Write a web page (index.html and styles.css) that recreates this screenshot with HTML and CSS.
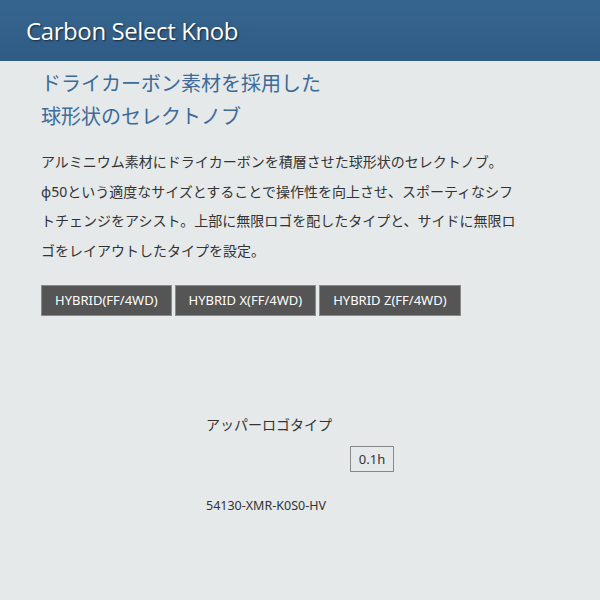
FILE: index.html
```html
<!DOCTYPE html>
<html lang="ja">
	<head>
		<meta charset="UTF-8" />
		<meta name="viewport" content="width=device-width, initial-scale=1" />
		<title>Carbon Select Knob</title>
		<link rel="stylesheet" href="styles.css">
	</head>
	<body>
		<header class="page-header">
			<h1>Carbon Select Knob</h1>
		</header>
		<main class="content">
			<h2 class="lead">ドライカーボン素材を採用した<br />球形状のセレクトノブ</h2>
			<p class="desc">
				アルミニウム素材にドライカーボンを積層させた球形状のセレクトノブ。<br />φ50という適度なサイズとすることで操作性を向上させ、スポーティなシフトチェンジをアシスト。上部に無限ロゴを配したタイプと、サイドに無限ロゴをレイアウトしたタイプを設定。
			</p>
			<div class="tabs">
				<a class="tab" href="#">HYBRID(FF/4WD)</a>
				<a class="tab" href="#">HYBRID X(FF/4WD)</a>
				<a class="tab" href="#">HYBRID Z(FF/4WD)</a>
			</div>
			<div class="item">
				<div class="item-name">アッパーロゴタイプ</div>
				<div class="item-time"><span>0.1h</span></div>
				<div class="item-code">54130-XMR-K0S0-HV</div>
			</div>
		</main>
	</body>
</html>
```

FILE: styles.css
```css
body {
	margin: 0;
	background-color: #e5e9ea;
	color: #333;
	font-family: 'Noto Sans', 'Noto Sans CJK JP', sans-serif;
}

.page-header {
	height: 61px;
	background: linear-gradient(#36668f, #2f5b85);
	display: flex;
	align-items: center;
	padding: 0 26px;
}

.page-header h1 {
	margin: 0;
	color: #fff;
	font-family: 'Open Sans', sans-serif;
	font-size: 24px;
	font-weight: normal;
	letter-spacing: -0.4px;
	text-shadow: 1px 1px 2px rgba(0, 0, 0, 0.6);
}

.content {
	padding: 0 41px;
}

.lead {
	margin: 6px 0 0;
	color: #3d6b99;
	font-size: 20px;
	font-weight: normal;
	line-height: 33px;
}

.desc {
	width: 480px;
	margin: 14px 0 0;
	font-size: 14px;
	line-height: 29.5px;
}

.tabs {
	display: flex;
	gap: 3px;
	margin-top: 20px;
}

.tab {
	display: block;
	height: 29px;
	line-height: 29px;
	padding: 0 13px;
	background-color: #555;
	border: 1px solid #8a8a8a;
	color: #fff;
	font-size: 13px;
	text-decoration: none;
}

.item {
	width: 188px;
	margin: 98px auto 0;
	font-size: 14px;
}

.item-time {
	display: flex;
	justify-content: flex-end;
	margin-top: 12px;
}

.item-time span {
	display: block;
	width: 42px;
	height: 24px;
	line-height: 24px;
	border: 1px solid #888;
	text-align: center;
	font-size: 13px;
}

.item-code {
	margin-top: 25px;
	font-size: 12.5px;
}
```
